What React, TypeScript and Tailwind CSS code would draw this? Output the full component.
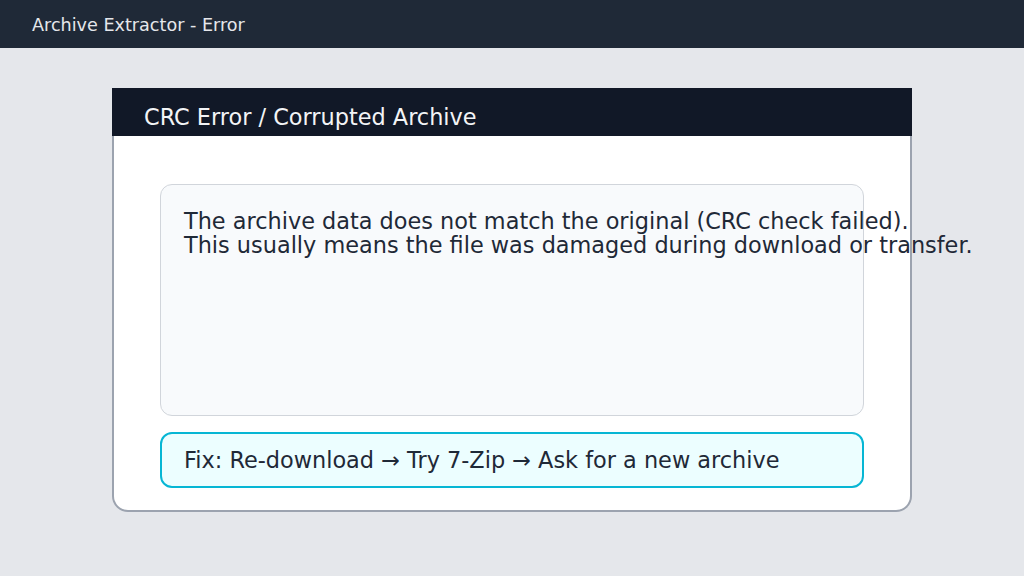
export default function App() {
  return (
    <div className="w-[1024px] h-[576px] bg-[#e5e7eb] flex flex-col font-['DejaVu_Sans',sans-serif] overflow-hidden">
      <div className="h-12 bg-[#1f2937] flex items-center px-8 shrink-0">
        <span className="text-[17.6px] leading-6 pt-0.5 text-[#e5e7eb]">Archive Extractor - Error</span>
      </div>
      <div className="flex justify-center pt-10">
        <div className="w-[800px] h-[424px] bg-white border-2 border-t-0 border-[#9ca3af] rounded-b-2xl flex flex-col">
          <div className="h-12 bg-[#111827] -mx-[2px] flex items-center px-8 shrink-0">
            <span className="text-[22.4px] text-[#f3f4f6] leading-6 pt-[10px]">CRC Error / Corrupted Archive</span>
          </div>
          <div className="flex flex-col gap-4 pt-12 px-[46px]">
            <div className="h-[232px] bg-[#f8fafc] border border-[#d1d5db] rounded-xl py-6 pl-[23px]">
              <p className="text-[22.4px] leading-6 text-[#1f2937] whitespace-nowrap">
                The archive data does not match the original (CRC check failed).
                <br />
                This usually means the file was damaged during download or transfer.
              </p>
            </div>
            <div className="h-14 bg-[#ecfeff] border-2 border-[#06b6d4] rounded-xl flex items-center px-[22px]">
              <span className="text-[22.4px] leading-6 text-[#1f2937]">
                Fix: Re-download → Try 7-Zip → Ask for a new archive
              </span>
            </div>
          </div>
        </div>
      </div>
    </div>
  );
}
